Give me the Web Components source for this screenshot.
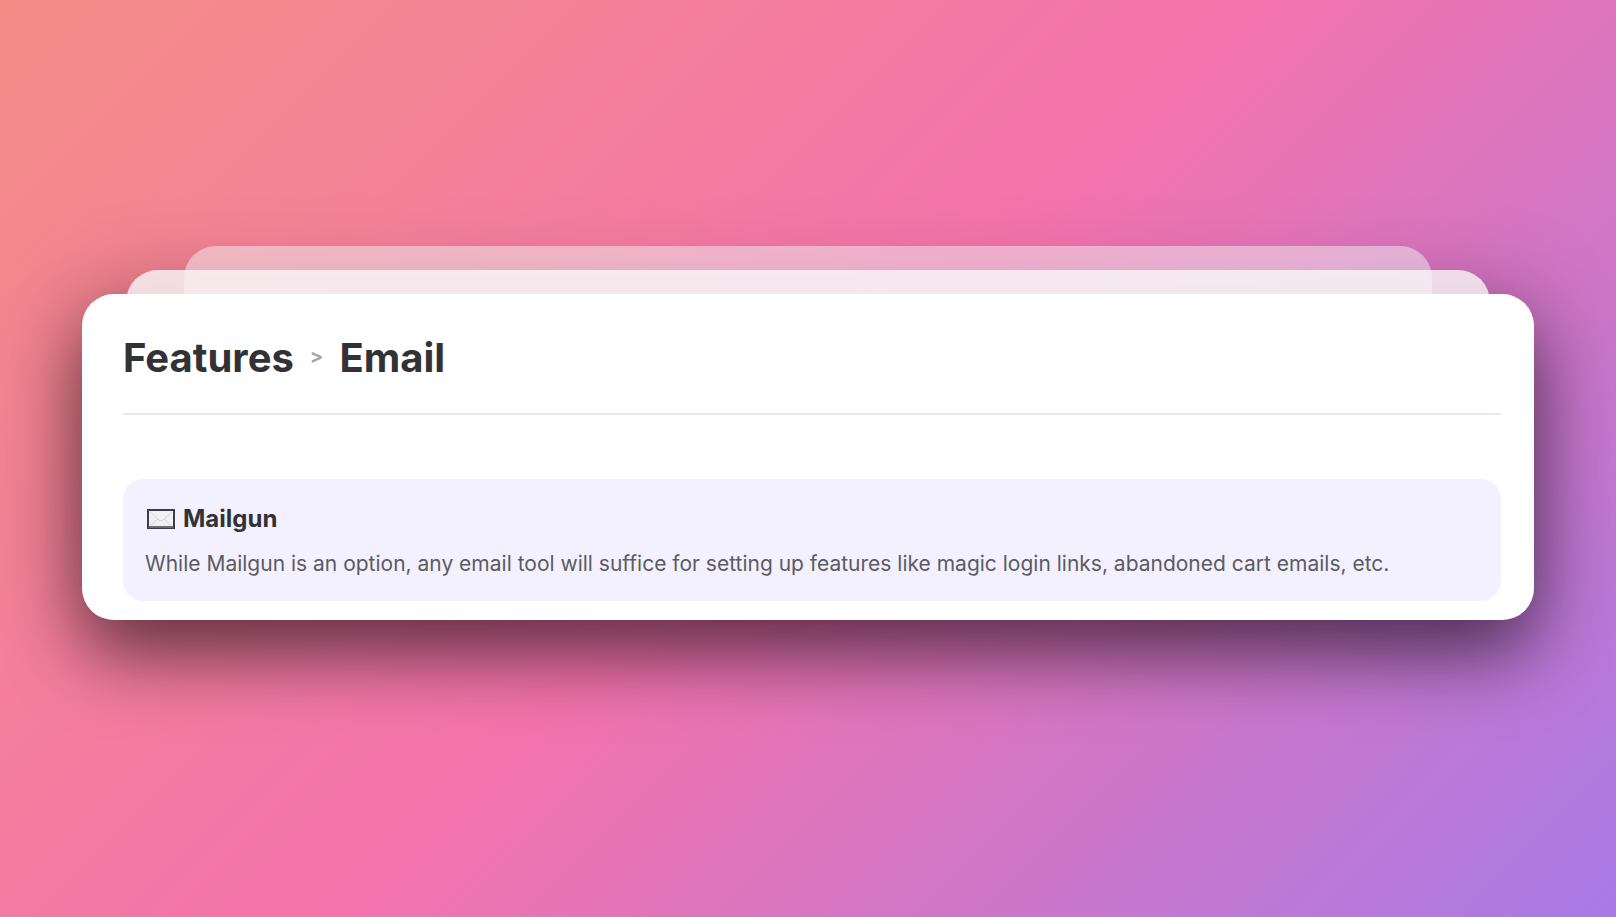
<!DOCTYPE html>
<html lang="en">
<head>
<meta charset="utf-8">
<meta name="viewport" content="width=device-width, initial-scale=1">
<title>Features &gt; Email</title>
<style>
  body { margin: 0; font-family: Inter, "Liberation Sans", sans-serif; color: #323135; }
</style>
</head>
<body>
<page-backdrop>
  <card-stack>
    <bread-crumb slot="header">
      <span>Features</span>
      <span slot="current">Email</span>
    </bread-crumb>
    <info-note>
      <span slot="title">Mailgun</span>
      While Mailgun is an option, any email tool will suffice for setting up features like magic login links, abandoned cart emails, etc.
    </info-note>
  </card-stack>
</page-backdrop>

<script>
function define(name, markup) {
  const template = document.createElement('template');
  template.innerHTML = markup;
  customElements.define(name, class extends HTMLElement {
    constructor() {
      super();
      this.attachShadow({ mode: 'open' }).append(template.content.cloneNode(true));
    }
  });
}

define('page-backdrop', `
  <style>
    :host {
      display: flex;
      align-items: center;
      box-sizing: border-box;
      min-height: 100vh;
      padding: 0 82px 4px;
      background: linear-gradient(135deg, #f58d86, #f373ad 50%, #a87ae6);
    }
  </style>
  <slot></slot>`);

define('card-stack', `
  <style>
    :host { display: block; position: relative; z-index: 0; flex: 1; min-width: 0; }
    .layer, .shadow, .card { border-radius: 32px; }
    .layer, .shadow { position: absolute; }
    .shadow { inset: 0; box-shadow: 0 36px 72px rgba(0, 0, 0, .52), 0 0 96px rgba(0, 0, 0, .22); }
    .far { inset: -48px 102px 32px; background: rgba(245, 240, 243, .5); }
    .near { inset: -24px 44px 32px; background: rgba(250, 248, 249, .8); }
    .card { position: relative; background: #fff; padding: 40px 33px 19px 41px; }
    header { padding-bottom: 31px; border-bottom: 2px solid #e9e8f0; margin-bottom: 64px; }
  </style>
  <div class="shadow"></div>
  <div class="layer far"></div>
  <div class="layer near"></div>
  <main class="card">
    <header><slot name="header"></slot></header>
    <slot></slot>
  </main>`);

define('bread-crumb', `
  <style>
    :host { display: block; }
    h1 { display: flex; align-items: center; gap: 16px; margin: 0; font-size: 40px; line-height: 48px; font-weight: 650; }
    .sep { padding-bottom: 4px; font-size: 20px; line-height: 24px; font-weight: 700; color: #a8a4ac; }
  </style>
  <h1><slot></slot><span class="sep">&gt;</span><slot name="current"></slot></h1>`);

define('info-note', `
  <style>
    :host { display: block; padding: 24px 22px 20px; border-radius: 20px; background: #f3f1ff; }
    h2 { display: flex; align-items: center; gap: 8px; margin: 0 0 12px; font-size: 24px; line-height: 32px; font-weight: 650; }
    svg { display: block; width: 30px; height: 20px; }
    p { margin: 0; font-size: 21px; line-height: 34px; color: #5c5b62; }
  </style>
  <h2>
    <svg viewBox="0 0 30 20" aria-hidden="true">
      <rect x="3" y="1" width="26" height="18" fill="#f1f0f4" stroke="#3e3d43" stroke-width="2"/>
      <path d="M4 18h24" stroke="#6c6b72" stroke-width="2"/>
      <path d="M5 3l9 8q2 2 4 0l9-8M5 17l8-7M27 17l-8-7" fill="none" stroke="#d5d4da"/>
    </svg>
    <slot name="title"></slot>
  </h2>
  <p><slot></slot></p>`);
</script>
</body>
</html>
